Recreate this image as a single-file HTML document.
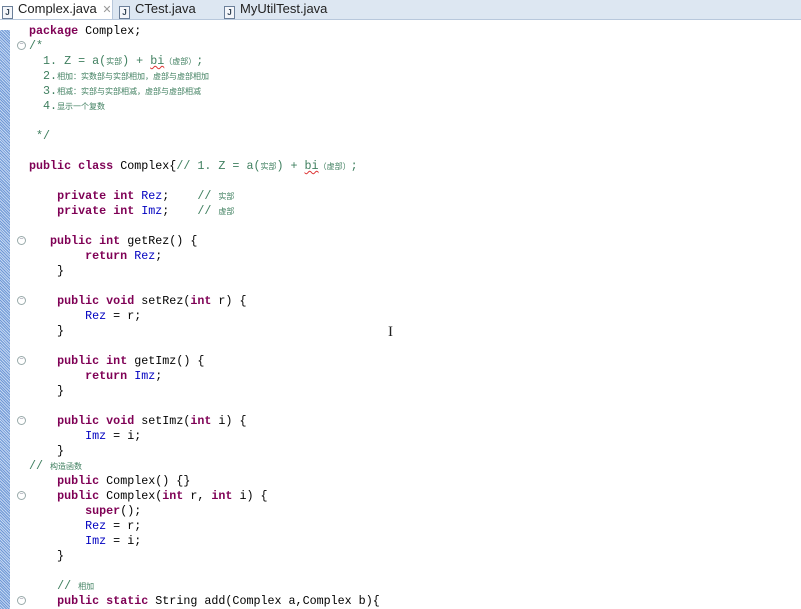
<!DOCTYPE html>
<html><head><meta charset="utf-8"><style>
body{margin:0;width:801px;height:609px;background:#fff;overflow:hidden;position:relative;font-family:"Liberation Mono",monospace}
.tabs{position:absolute;left:0;top:0;width:801px;height:19px;background:#dde7f2;border-bottom:1px solid #b8c8dc}
.tab{position:absolute;top:0;height:19px;font-family:"Liberation Sans",sans-serif;font-size:13px;line-height:18px;color:#222}
.ic{display:inline-block;width:9px;height:11px;border:1px solid #6b7f99;background:#f4f6fa;font-size:8px;line-height:11px;text-align:center;color:#345;vertical-align:-2px;margin-right:5px;font-weight:bold}
.strip{position:absolute;left:0;top:30px;width:10px;height:579px;background:repeating-linear-gradient(45deg,#6f98d6 0 1px,#c4d7f2 1px 2px)}
.code{position:absolute;left:29px;top:24px;font-size:11.7px;line-height:15px;white-space:pre;color:#000}
.k{color:#7f0055;font-weight:bold}.f{color:#0000c0}.c{color:#3f7f5f}
.z{font-family:"Noto Sans CJK SC",sans-serif;font-size:8px}
.fold{position:absolute;left:17px;width:7px;height:7px;border:1px solid #9aa;border-radius:50%;font-size:7px;line-height:7px;text-align:center;color:#889}
.u{text-decoration:underline wavy #d33;text-decoration-thickness:1px}
</style></head><body>
<div class="tabs">
<div class="tab" style="left:0;width:110px;background:#fff;padding-left:2px"><span class="ic">J</span>Complex.java <span style="color:#999;font-size:11px;margin-left:2px">✕</span></div>
<div class="tab" style="left:112px;border-left:1px solid #b8c8dc;padding-left:6px"><span class="ic">J</span>CTest.java</div>
<div class="tab" style="left:222px;padding-left:2px"><span class="ic">J</span>MyUtilTest.java</div>
</div>
<div class="strip"></div>
<div class="fold" style="top:41px">−</div>
<div class="fold" style="top:236px">−</div>
<div class="fold" style="top:296px">−</div>
<div class="fold" style="top:356px">−</div>
<div class="fold" style="top:416px">−</div>
<div class="fold" style="top:491px">−</div>
<div class="fold" style="top:596px">−</div>
<div class="code"><span class="k">package</span> Complex;
<span class="c">/*</span>
<span class="c">  1. Z = a(<span class="z">实部</span>) + <span class="u">bi</span><span class="z">（虚部）</span>;</span>
<span class="c">  2.<span class="z">相加：实数部与实部相加，虚部与虚部相加</span></span>
<span class="c">  3.<span class="z">相减：实部与实部相减，虚部与虚部相减</span></span>
<span class="c">  4.<span class="z">显示一个复数</span></span>

<span class="c"> */</span>

<span class="k">public</span> <span class="k">class</span> Complex{<span class="c">// 1. Z = a(<span class="z">实部</span>) + <span class="u">bi</span><span class="z">（虚部）</span>;</span>

    <span class="k">private</span> <span class="k">int</span> <span class="f">Rez</span>;    <span class="c">// <span class="z">实部</span></span>
    <span class="k">private</span> <span class="k">int</span> <span class="f">Imz</span>;    <span class="c">// <span class="z">虚部</span></span>

   <span class="k">public</span> <span class="k">int</span> getRez() {
        <span class="k">return</span> <span class="f">Rez</span>;
    }

    <span class="k">public</span> <span class="k">void</span> setRez(<span class="k">int</span> r) {
        <span class="f">Rez</span> = r;
    }

    <span class="k">public</span> <span class="k">int</span> getImz() {
        <span class="k">return</span> <span class="f">Imz</span>;
    }

    <span class="k">public</span> <span class="k">void</span> setImz(<span class="k">int</span> i) {
        <span class="f">Imz</span> = i;
    }
<span class="c">// <span class="z">构造函数</span></span>
    <span class="k">public</span> Complex() {}
    <span class="k">public</span> Complex(<span class="k">int</span> r, <span class="k">int</span> i) {
        <span class="k">super</span>();
        <span class="f">Rez</span> = r;
        <span class="f">Imz</span> = i;
    }

    <span class="c">// <span class="z">相加</span></span>
    <span class="k">public</span> <span class="k">static</span> String add(Complex a,Complex b){</div>
<div style="position:absolute;left:388px;top:324px;font-family:'Liberation Serif',serif;font-size:15px;color:#222">I</div>
</body></html>
